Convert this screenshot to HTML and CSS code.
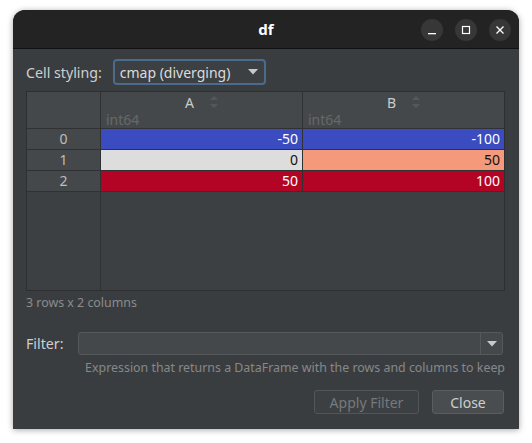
FILE: index.html
```html
<!DOCTYPE html>
<html>
<head>
<meta charset="utf-8">
<link rel="stylesheet" href="styles.css">
</head>
<body>
<div class="window">
  <div class="titlebar">
    <div class="title">df</div>
    <div class="controls">
      <div class="ctl"><svg width="10" height="10" viewBox="0 0 10 10"><rect x="1" y="8" width="8" height="1.3" fill="#fff"/></svg></div>
      <div class="ctl"><svg width="10" height="10" viewBox="0 0 10 10"><rect x="1.5" y="1.5" width="7" height="7" fill="none" stroke="#fff" stroke-width="1.2"/></svg></div>
      <div class="ctl"><svg width="10" height="10" viewBox="0 0 10 10"><path d="M1.5 1.5 L8.5 8.5 M8.5 1.5 L1.5 8.5" stroke="#fff" stroke-width="1.3"/></svg></div>
    </div>
  </div>
  <div class="content">
    <div class="style-row">
      <span class="label">Cell styling:</span>
      <div class="combo">
        <span>cmap (diverging)</span>
        <svg class="arrow" width="10" height="6" viewBox="0 0 10 6"><path d="M0 0 H10 L5 5.5 Z" fill="#c8c8c8"/></svg>
      </div>
    </div>
    <div class="table">
      <div class="grid">
        <div class="corner"></div>
        <div class="hcell">
          <div class="hname"><span>A</span><svg class="sort" width="8" height="16" viewBox="0 0 8 16"><path d="M0 6 L4 2 L8 6 Z M0 10 L4 14 L8 10 Z" fill="#55585b"/></svg></div>
          <div class="dtype">int64</div>
        </div>
        <div class="hcell">
          <div class="hname"><span>B</span><svg class="sort" width="8" height="16" viewBox="0 0 8 16"><path d="M0 6 L4 2 L8 6 Z M0 10 L4 14 L8 10 Z" fill="#55585b"/></svg></div>
          <div class="dtype">int64</div>
        </div>
        <div class="rh">0</div>
        <div class="cell blue">-50</div>
        <div class="cell blue">-100</div>
        <div class="rh">1</div>
        <div class="cell grey">0</div>
        <div class="cell salmon">50</div>
        <div class="rh">2</div>
        <div class="cell red">50</div>
        <div class="cell red">100</div>
        <div class="rfill"></div>
        <div class="fill"></div>
      </div>
    </div>
    <div class="count">3 rows x 2 columns</div>
    <div class="filter-row">
      <span class="label">Filter:</span>
      <div class="fcombo">
        <div class="finput"></div>
        <div class="fdrop"><svg width="10" height="6" viewBox="0 0 10 6"><path d="M0 0 H10 L5 5.5 Z" fill="#c8c8c8"/></svg></div>
      </div>
    </div>
    <div class="hint">Expression that returns a DataFrame with the rows and columns to keep</div>
    <div class="buttons">
      <div class="btn disabled">Apply Filter</div>
      <div class="btn">Close</div>
    </div>
  </div>
</div>
</body>
</html>
```

FILE: styles.css
```css
html, body {
  margin: 0;
  padding: 0;
  background: #ffffff;
}
body {
  font-family: "Noto Sans", "DejaVu Sans", sans-serif;
  width: 532px;
  height: 443px;
  overflow: hidden;
}
.window {
  margin: 10px 0 0 13px;
  width: 506px;
  height: 419px;
  border-radius: 12px 12px 0 0;
  background: #3a3d40;
  box-shadow: 0 1px 6px rgba(0,0,0,0.35);
  overflow: hidden;
  display: flex;
  flex-direction: column;
}
.titlebar {
  height: 38px;
  background: #232323;
  border-bottom: 1px solid #111;
  position: relative;
  display: flex;
  align-items: center;
  justify-content: center;
  flex-shrink: 0;
}
.title {
  color: #fff;
  font-weight: bold;
  font-size: 15px;
}
.controls {
  position: absolute;
  right: 8px;
  top: 9px;
  display: flex;
  gap: 12px;
}
.ctl {
  width: 22px;
  height: 22px;
  border-radius: 50%;
  background: #373737;
  display: flex;
  align-items: center;
  justify-content: center;
}
.content {
  padding: 10px 14px 0 13px;
  display: flex;
  flex-direction: column;
}
.label {
  color: #cfcfcf;
  font-size: 14.2px;
}
.style-row {
  display: flex;
  align-items: center;
  height: 26px;
}
.combo {
  margin-left: 11px;
  height: 22px;
  border: 2px solid #4b6a8c;
  border-radius: 4px;
  background: #3d4043;
  display: flex;
  align-items: center;
  justify-content: space-between;
  padding: 0 6px 0 5px;
  color: #dcdcdc;
  font-size: 14px;
  width: 138px;
}
.table {
  margin-top: 6px;
  height: 200px;
  border: 1px solid #2d2f31;
  box-sizing: border-box;
  background: #3d4043;
}
.grid {
  display: grid;
  grid-template-columns: 74px 202px 1fr;
  grid-template-rows: 37px 21px 21px 21px 1fr;
  height: 100%;
}
.corner, .hcell, .rh {
  background: #45484a;
  border-right: 1px solid #2f3133;
  border-bottom: 1px solid #2f3133;
}
.hcell {
  display: flex;
  flex-direction: column;
  justify-content: space-between;
}
.hcell:nth-child(3) { border-right: none; }
.hname {
  color: #cccccc;
  font-size: 14px;
  display: flex;
  justify-content: center;
  align-items: center;
  gap: 16px;
  padding-top: 2px;
  height: 18px;
  line-height: 18px;
}
.sort {
  margin-top: -2px;
}
.dtype {
  color: #65686b;
  font-size: 14px;
  padding-left: 5px;
  line-height: 16px;
  height: 17px;
}
.rh {
  color: #bdbdbd;
  font-size: 14px;
  text-align: center;
  line-height: 20px;
}
.cell {
  font-size: 14px;
  text-align: right;
  padding-right: 4px;
  line-height: 20px;
  border-bottom: 1px solid #2f3133;
  border-right: 1px solid #2f3133;
}
.cell:nth-child(3n) { border-right: none; }
.blue { background: #3b4cc0; color: #ffffff; }
.grey { background: #dddddd; color: #111111; }
.salmon { background: #f49a7b; color: #111111; }
.red { background: #b40426; color: #ffffff; }
.rfill {
  background: #3d4043;
  border-right: 1px solid #2f3133;
}
.fill {
  grid-column: 2 / 4;
  background: #3d4043;
}
.count {
  color: #8a8c8e;
  font-size: 12.4px;
  margin-top: 4px;
  line-height: 16px;
}
.filter-row {
  display: flex;
  align-items: center;
  margin-top: 21px;
  height: 23px;
}
.fcombo {
  margin-left: 15px;
  flex: 1;
  height: 23px;
  box-sizing: border-box;
  border: 1px solid #56595c;
  border-radius: 3px;
  background: #45484a;
  display: flex;
  margin-right: 2px;
}
.finput { flex: 1; }
.fdrop {
  width: 21px;
  border-left: 1px solid #56595c;
  display: flex;
  align-items: center;
  justify-content: center;
}
.hint {
  color: #86888a;
  font-size: 12.4px;
  text-align: right;
  margin-top: 5px;
  line-height: 16px;
}
.buttons {
  display: flex;
  justify-content: flex-end;
  gap: 13px;
  margin-top: 14px;
  margin-right: 1px;
}
.btn {
  height: 24px;
  box-sizing: border-box;
  border: 1px solid #5a5d60;
  border-radius: 3px;
  background: #4a4d50;
  color: #cfcfcf;
  font-size: 14px;
  display: flex;
  align-items: center;
  justify-content: center;
  width: 72px;
}
.btn.disabled {
  background: #3d4043;
  color: #77797b;
  width: 105px;
  border-color: #535659;
}
```
